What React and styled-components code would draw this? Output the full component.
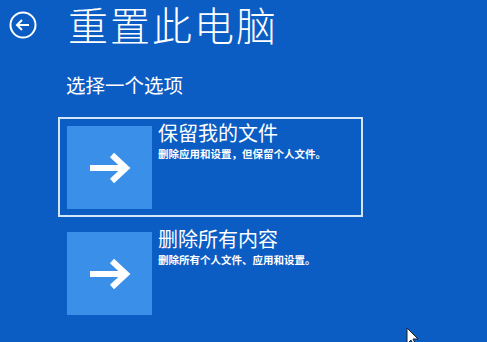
import React from 'react'
import styled, { createGlobalStyle } from 'styled-components'

const GlobalStyle = createGlobalStyle`
    html, body {
        margin: 0;
        padding: 0;
        background: #0b5dc4;
        font-family: "Noto Sans CJK SC", "Noto Sans", sans-serif;
        color: #fff;
    }
`

const Page = styled.div`
    position: relative;
    width: 487px;
    height: 342px;
    overflow: hidden;
    background: #0b5dc4;
`

const Header = styled.div`
    display: flex;
    align-items: flex-start;
    padding: 0 0 0 9px;
`

const BackButton = styled.div`
    width: 28px;
    height: 28px;
    margin-top: 11px;
    flex-shrink: 0;
`

const Title = styled.h1`
    margin: 0 0 0 31px;
    padding-right: 4px;
    font-size: 40px;
    line-height: 48px;
    font-weight: 300;
    letter-spacing: 2px;
    white-space: nowrap;
`

const Subtitle = styled.div`
    margin: 25px 0 0 66px;
    font-size: 19.5px;
    line-height: 24px;
    font-weight: 400;
`

const Options = styled.div`
    display: flex;
    flex-direction: column;
    gap: 6px;
    margin: 20px 0 0 58px;
    width: 305px;
`

const Card = styled.div`
    display: flex;
    align-items: flex-start;
    gap: 6px;
    padding: 7px 6px 6px 7px;
    border: 2px solid ${props => props.selected ? '#d2e6f7' : 'transparent'};
`

const Tile = styled.div`
    width: 85px;
    height: 83px;
    flex-shrink: 0;
    background: #3a8fe8;
    display: flex;
    align-items: center;
    justify-content: center;
`

const Text = styled.div`
    display: flex;
    flex-direction: column;
    margin-top: -6px;
`

const CardTitle = styled.div`
    font-size: 20px;
    line-height: 26px;
    font-weight: 400;
`

const CardDesc = styled.div`
    font-size: 10.5px;
    line-height: 14px;
    font-weight: 700;
    margin-top: 1px;
`

const Cursor = styled.svg`
    position: absolute;
    left: 406px;
    top: 327px;
`

const Arrow = () => (
    <svg width="42" height="32" viewBox="0 0 42 32">
        <path d="M1 16 H36 M23 3 L37 16 L23 29" fill="none" stroke="#fff" strokeWidth="6" strokeLinejoin="miter" />
    </svg>
)

const options = [
    { title: '保留我的文件', desc: '删除应用和设置，但保留个人文件。', selected: true },
    { title: '删除所有内容', desc: '删除所有个人文件、应用和设置。', selected: false },
]

const App = () => {
    return (
        <Page>
            <GlobalStyle />
            <Header>
                <BackButton>
                    <svg width="28" height="28" viewBox="0 0 28 28">
                        <circle cx="14" cy="14" r="12.5" fill="none" stroke="#fff" strokeWidth="2" />
                        <path d="M20 14 H8 M13 9 L8 14 L13 19" fill="none" stroke="#fff" strokeWidth="2" />
                    </svg>
                </BackButton>
                <Title>重置此电脑</Title>
            </Header>
            <Subtitle>选择一个选项</Subtitle>
            <Options>
                {options.map((opt) => (
                    <Card key={opt.title} selected={opt.selected}>
                        <Tile>
                            <Arrow />
                        </Tile>
                        <Text>
                            <CardTitle>{opt.title}</CardTitle>
                            <CardDesc>{opt.desc}</CardDesc>
                        </Text>
                    </Card>
                ))}
            </Options>
            <Cursor width="14" height="20" viewBox="0 0 14 20">
                <path d="M1 1 L1 17 L5 13 L8 19 L10 18 L7 12 L12 12 Z" fill="#fff" stroke="#222" strokeWidth="1" />
            </Cursor>
        </Page>
    )
}

export default App
